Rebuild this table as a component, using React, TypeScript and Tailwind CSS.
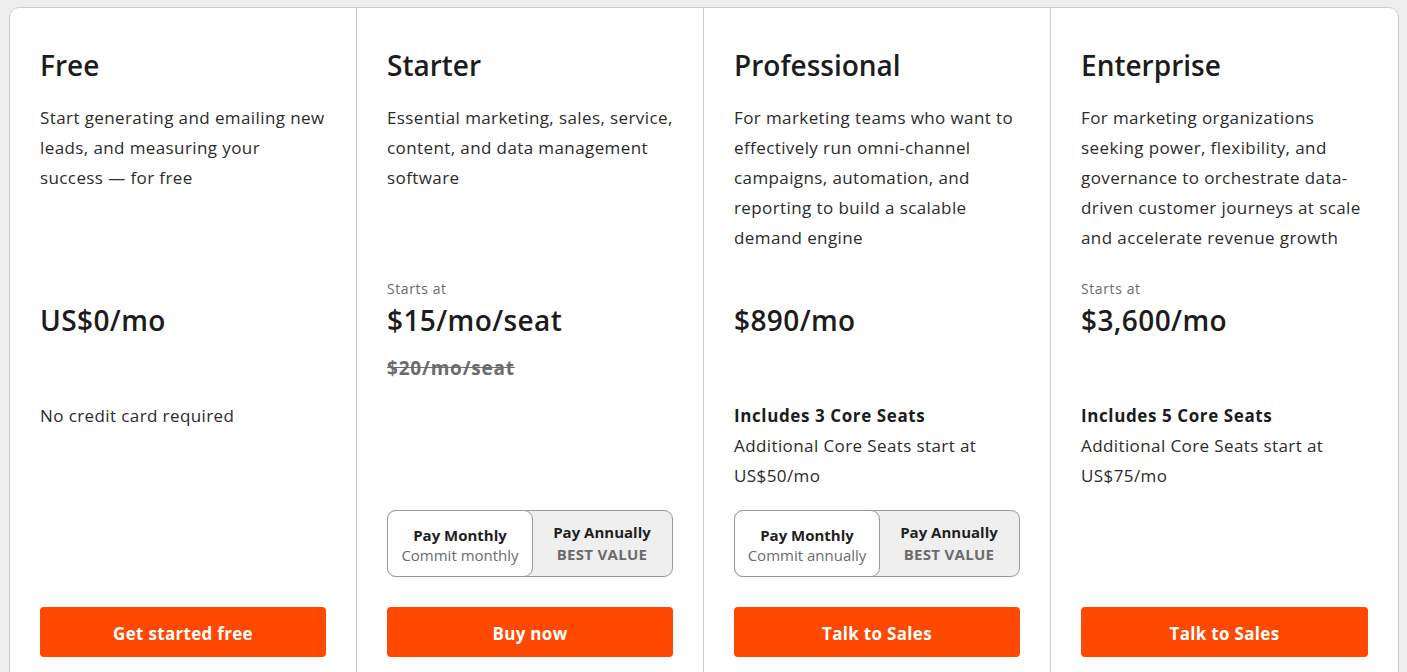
type Plan = {
  name: string;
  desc: string;
  startsAt?: boolean;
  price: string;
  strike?: string;
  includes?: string;
  extra?: string;
  commit?: string;
  cta: string;
};

const plans: Plan[] = [
  {
    name: "Free",
    desc: "Start generating and emailing new leads, and measuring your success — for free",
    price: "US$0/mo",
    extra: "No credit card required",
    cta: "Get started free",
  },
  {
    name: "Starter",
    desc: "Essential marketing, sales, service, content, and data management software",
    startsAt: true,
    price: "$15/mo/seat",
    strike: "$20/mo/seat",
    commit: "Commit monthly",
    cta: "Buy now",
  },
  {
    name: "Professional",
    desc: "For marketing teams who want to effectively run omni-channel campaigns, automation, and reporting to build a scalable demand engine",
    price: "$890/mo",
    includes: "Includes 3 Core Seats",
    extra: "Additional Core Seats start at US$50/mo",
    commit: "Commit annually",
    cta: "Talk to Sales",
  },
  {
    name: "Enterprise",
    desc: "For marketing organizations seeking power, flexibility, and governance to orchestrate data-driven customer journeys at scale and accelerate revenue growth",
    startsAt: true,
    price: "$3,600/mo",
    includes: "Includes 5 Core Seats",
    extra: "Additional Core Seats start at US$75/mo",
    cta: "Talk to Sales",
  },
];

function BillingToggle({ commit }: { commit: string }) {
  return (
    <div className="flex h-[67px] rounded-[9px] border border-[#9a9a9a] bg-[#efefef]">
      <div className="-m-px flex w-[146px] flex-col items-center justify-center rounded-[9px] border border-[#9a9a9a] bg-white pt-[3px]">
        <span className="text-[15px] font-bold leading-[20px] text-[#1f1f1f]">Pay Monthly</span>
        <span className="text-[15px] leading-[20px] text-[#6b6b6b]">{commit}</span>
      </div>
      <div className="flex flex-1 flex-col items-center justify-center pb-[2px]">
        <span className="text-[15px] font-bold leading-[22px] text-[#1f1f1f]">Pay Annually</span>
        <span className="text-[15px] font-bold leading-[22px] tracking-[0.3px] text-[#6b6b6b]">BEST VALUE</span>
      </div>
    </div>
  );
}

function PlanColumn({ plan }: { plan: Plan }) {
  return (
    <div className="flex flex-col px-[30px] pb-[60px] pt-[39px]">
      <h2 className="text-[28px] font-semibold leading-[36px] text-[#1c1c1c]">{plan.name}</h2>
      <p className="mt-[20px] h-[176px] text-[17px] leading-[30px] tracking-[0.4px] text-[#2b2b2b]">{plan.desc}</p>
      <div className="h-[20px] text-[14px] leading-[20px] tracking-[0.6px] text-[#6b6b6b]">
        {plan.startsAt ? "Starts at" : ""}
      </div>
      <div className="mt-[3px] text-[28px] font-semibold leading-[36px] tracking-[0.4px] text-[#1c1c1c]">
        {plan.price}
      </div>
      <div className="mt-[18px] h-[24px] text-[19px] font-bold leading-[24px] tracking-[0.8px] text-[#6b6b6b] line-through">
        {plan.strike ?? ""}
      </div>
      <div className="mt-[21px] h-[109px] text-[17px] leading-[30px] tracking-[0.4px] text-[#2b2b2b]">
        {plan.includes && <div className="font-bold tracking-[0.6px] text-[#1c1c1c]">{plan.includes}</div>}
        {plan.extra && <div>{plan.extra}</div>}
      </div>
      <div className="h-[67px]">{plan.commit && <BillingToggle commit={plan.commit} />}</div>
      <button className="mt-[30px] h-[50px] rounded-[4px] bg-[#ff4800] pt-[3px] text-[17px] font-bold tracking-[0.3px] text-white">
        {plan.cta}
      </button>
    </div>
  );
}

export default function App() {
  return (
    <div
      className="min-h-screen bg-[#efefef] pl-[9px] pr-[8px] pt-[7px]"
      style={{ fontFamily: '"Open Sans", "Noto Sans", sans-serif' }}
    >
      <div className="grid grid-cols-4 divide-x divide-[#cccccc] rounded-[10px] border border-[#cccccc] bg-white">
        {plans.map((p) => (
          <PlanColumn key={p.name} plan={p} />
        ))}
      </div>
    </div>
  );
}
